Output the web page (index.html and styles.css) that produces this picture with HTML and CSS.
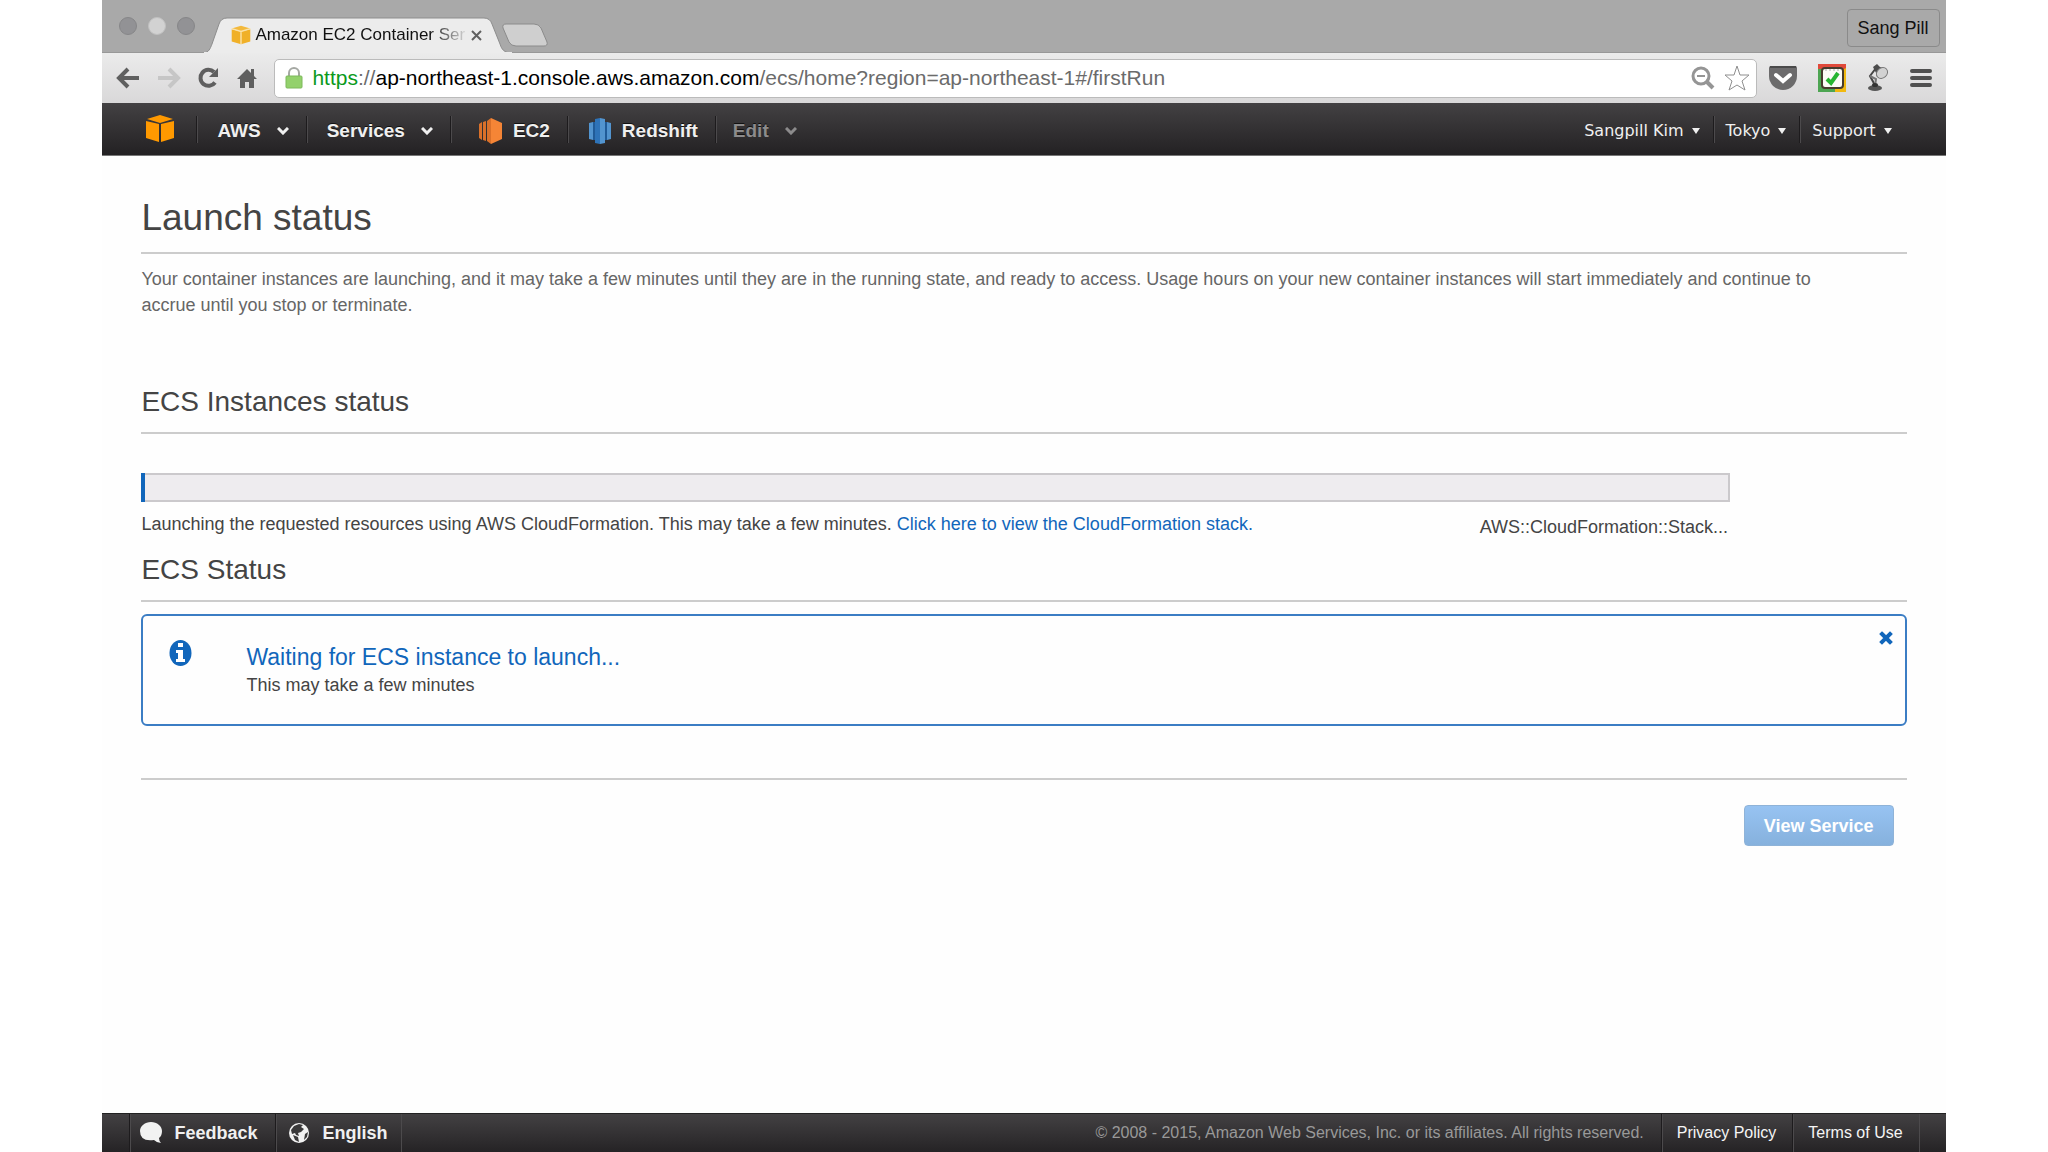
FILE: index.html
```html
<!DOCTYPE html>
<html lang="en">
<head>
  <meta charset="utf-8">
  <title>Amazon EC2 Container Service</title>
  <link rel="stylesheet" href="styles.css">
</head>
<body>
  <div class="window">
    <div class="tab-strip">
      <div class="lights"><span></span><span class="light"></span><span></span></div>
      <div class="tab">
        <svg class="tab-shape" viewBox="0 0 308 36"><path d="M0 36 C5 35 6 32 8 27 L15 7 Q17 1 23 1 H280 Q286 1 288 7 L296 27 C298 33 300 35 306 36Z" fill="#ececec" stroke="#8d8d8d"/><path d="M0 36H308" stroke="#ececec" stroke-width="2"/></svg>
        <svg class="favicon" width="20" height="20" viewBox="0 0 28 28"><path d="M1 6 14 9v18L1 23zM27 6 14 9v18l13-4z" fill="#f0b028"/><path d="M1 5 14 1l13 4-13 4z" fill="#f3b93c"/><path d="M1 5l13 4 13-4M14 9v18" stroke="#fbe2a8" stroke-width="2" fill="none"/></svg>
        <span class="tab-title">Amazon EC2 Container Ser</span>
        <button class="tab-close" aria-label="Close tab"><svg width="11" height="11" viewBox="0 0 11 11"><path d="M1 1l9 9M10 1l-9 9" stroke="#606060" stroke-width="2"/></svg></button>
      </div>
      <button class="new-tab" aria-label="New tab"><svg width="48" height="24" viewBox="0 0 48 24"><path d="M5 1H33Q38 1 40 5L46 19Q47 23 43 23H15Q10 23 8 19L2 5Q1 1 5 1Z" fill="#cfcfcf" stroke="#8b8b8b"/></svg></button>
      <button class="profile">Sang Pill</button>
    </div>

    <div class="toolbar">
      <button aria-label="Back"><svg width="24" height="22" viewBox="0 0 24 22"><path d="M12 2 3 11l9 9M3 11h20" stroke="#5f5f5f" stroke-width="4" fill="none"/></svg></button>
      <button aria-label="Forward"><svg width="24" height="22" viewBox="0 0 24 22"><path d="M12 2l9 9-9 9M21 11H1" stroke="#c6c6c6" stroke-width="4" fill="none"/></svg></button>
      <button aria-label="Reload"><svg width="22" height="22" viewBox="0 0 22 22"><path d="M17 15.500A8 8 0 1 1 16 5" stroke="#5f5f5f" stroke-width="4" fill="none"/><path d="M20 1v9h-9z" fill="#5f5f5f"/></svg></button>
      <button aria-label="Home"><svg width="20" height="22" viewBox="0 0 20 22"><path d="M10 2 0 12h3v9h5v-6h4v6h5v-9h3l-3-3V2h-3v4z" fill="#5f5f5f"/></svg></button>
      <div class="omnibox">
        <svg width="18" height="22" viewBox="0 0 18 22"><path d="M4 10V6a5 5 0 0 1 10 0v4" stroke="#a5a8a3" stroke-width="2" fill="none"/><rect x="1" y="9" width="16" height="12" rx="1" fill="#93d16c" stroke="#7cb95a"/></svg>
        <div class="url" role="textbox" aria-label="Address" contenteditable="true" spellcheck="false"><span class="scheme">https</span><span class="dim">://</span>ap-northeast-1.console.aws.amazon.com<span class="dim">/ecs/home?region=ap-northeast-1#/firstRun</span></div>
        <button aria-label="Zoom"><svg width="24" height="24" viewBox="0 0 24 24"><circle cx="10" cy="10" r="8" stroke="#959595" stroke-width="3" fill="none"/><path d="M6 10h8" stroke="#959595" stroke-width="2"/><path d="M16 16l6 6" stroke="#959595" stroke-width="4"/></svg></button>
        <button aria-label="Bookmark"><svg width="26" height="26" viewBox="0 0 26 26"><path d="M13 1l3 9h9l-7 6 3 9-8-5-8 5 3-9-7-6h9z" stroke="#8f8f8f" fill="#fff" stroke-linejoin="round"/></svg></button>
      </div>
      <div class="extensions">
        <button aria-label="Pocket"><svg width="28" height="26" viewBox="0 0 28 26"><path d="M2 1h24q2 0 2 2v8a14 14 0 0 1-28 0V3q0-2 2-2z" fill="#6c6b6c"/><path d="M1 2h26" stroke="#4a4a4a" stroke-width="2"/><path d="M7 10l7 6 7-6" stroke="#fff" stroke-width="4" fill="none" stroke-linecap="round"/></svg></button>
        <button aria-label="Tasks"><svg width="28" height="28" viewBox="0 0 28 28"><path d="M0 0h28v10H0z" fill="#e0493a"/><path d="M0 5h10v23H0z" fill="#4da552"/><path d="M0 28h18v-6H0z" fill="#4da552"/><path d="M28 4v24H17V10z" fill="#f2b90f"/><rect x="4" y="4" width="21" height="20" rx="3" fill="#fbfbf6" stroke="#463b2d" stroke-width="2"/><path d="M8 5v2M12 5v2M16 5v2M20 5v2" stroke="#aaa"/><path d="M9 15l4 4 7-10" stroke="#27b531" stroke-width="4" fill="none"/></svg></button>
        <button aria-label="Reading lamp"><svg width="22" height="28" viewBox="0 0 22 28"><path d="M9 23 3 12 9 4" stroke="#444" stroke-width="2" fill="none"/><path d="M3 12l6 3-1 7" stroke="#777" stroke-width="2" fill="none"/><path d="M6 3 10 0 13 3 19 5 12 14 8 7z" fill="#4c4c4c"/><ellipse cx="15" cy="9" rx="6" ry="5" transform="rotate(-42 15 9)" fill="#d2d2d2" stroke="#777"/><ellipse cx="8" cy="24" rx="7" ry="3" fill="#555"/><ellipse cx="8" cy="21" rx="3" ry="2" fill="#333"/></svg></button>
        <button aria-label="Menu"><svg width="22" height="20" viewBox="0 0 22 20"><path d="M2 3h18M2 10h18M2 17h18" stroke="#505050" stroke-width="4" stroke-linecap="round"/></svg></button>
      </div>
    </div>

    <nav class="aws-nav">
      <a class="logo" href="#" aria-label="Console home"><svg width="28" height="28" viewBox="0 0 28 28"><path d="M0 6l13 3v18L0 23zM28 6 15 9v18l13-4z" fill="#f90"/><path d="M1 4l13-4 13 4-13 4z" fill="#f90"/></svg></a>
      <button class="nav-item">AWS <svg width="12" height="8" viewBox="0 0 12 8"><path d="M1 1l5 5 5-5" /></svg></button>
      <button class="nav-item">Services <svg width="12" height="8" viewBox="0 0 12 8"><path d="M1 1l5 5 5-5" /></svg></button>
      <a class="nav-item service ec2" href="#"><svg width="24" height="26" viewBox="0 0 24 26"><path d="M0 6l3-2v18l-3-2zM4 4l3-1v20l-3-1zM8 3l4-3v26l-4-3z" fill="#d9702a"/><path d="M12 0l11 5v16l-11 5z" fill="#f58536"/></svg>EC2</a>
      <a class="nav-item service" href="#"><svg width="24" height="26" viewBox="0 0 24 26"><path d="M1 5l4-1v18l-4-1zM19 4l4 1v16l-4 1z" fill="#5294cf"/><path d="M5 4h2v18H5zM17 4h2v18h-2z" fill="#205b98"/><path d="M7 1l5-1v26l-5-1z" fill="#2e73b8"/><path d="M12 0l5 1v24l-5 1z" fill="#5294cf"/></svg>Redshift</a>
      <button class="nav-item edit">Edit <svg width="12" height="8" viewBox="0 0 12 8"><path d="M1 1l5 5 5-5" /></svg></button>
      <div class="account">
        <button>Sangpill Kim <span class="caret"></span></button>
        <button>Tokyo <span class="caret"></span></button>
        <button>Support <span class="caret"></span></button>
      </div>
    </nav>

    <main>
      <h1>Launch status</h1>
      <p class="intro">Your container instances are launching, and it may take a few minutes until they are in the running state, and ready to access. Usage hours on your new container instances will start immediately and continue to accrue until you stop or terminate.</p>

      <h2>ECS Instances status</h2>
      <div class="progress">
        <div class="track" role="progressbar" aria-label="Launch progress" aria-valuenow="0"><div class="bar"></div></div>
        <div class="caption">
          <span>Launching the requested resources using AWS CloudFormation. This may take a few minutes. <a href="#">Click here to view the CloudFormation stack.</a></span>
          <span class="resource">AWS::CloudFormation::Stack...</span>
        </div>
      </div>

      <h2 class="second">ECS Status</h2>
      <div class="alert">
        <svg class="info" width="23" height="26" viewBox="0 0 23 26"><ellipse cx="11.500" cy="13" rx="11" ry="13" fill="#1166bb"/><path d="M9 3h5v4H9zM7 10h7v9h2v3H7v-3h2v-6H7z" fill="#fff"/></svg>
        <div class="message">
          <h3>Waiting for ECS instance to launch...</h3>
          <p>This may take a few minutes</p>
        </div>
        <button class="dismiss" aria-label="Dismiss"><svg width="14" height="14" viewBox="0 0 14 14"><path d="M3 3l8 8M11 3l-8 8" stroke="#1166bb" stroke-width="4" stroke-linecap="square"/></svg></button>
      </div>

      <div class="actions">
        <button class="primary" disabled>View Service</button>
      </div>
    </main>

    <footer>
      <a class="foot-item" href="#"><svg width="22" height="22" viewBox="0 0 22 22"><path d="M11 0C17 0 22 4 22 9q0 5-3 7 0 3 2 5-4 0-7-3-14 2-14-9C0 4 5 0 11 0z" fill="#f2f2f2"/></svg>Feedback</a>
      <button class="foot-item"><svg width="22" height="22" viewBox="0 0 22 22"><circle cx="11" cy="11" r="10" fill="#f2f2f2"/><path d="M3 8 6 4l5-2 4 1-2 2 3 2-3 3-3 1 1 3-3-1-1-2-3 1zM5 13l5 2 1 5-4-2z" fill="#3a393a"/><path d="M17 12l3-2-1 5-3 3z" fill="#3a393a"/></svg>English</button>
      <span class="copyright">© 2008 - 2015, Amazon Web Services, Inc. or its affiliates. All rights reserved.</span>
      <div class="legal">
        <a href="#">Privacy Policy</a>
        <a href="#">Terms of Use</a>
      </div>
    </footer>
  </div>
</body>
</html>
```
FILE: styles.css
```css
* {
  box-sizing: border-box;
}
body {
  margin: 0;
  background: #fff;
  color: #444;
  font: 18px/26px "Liberation Sans", Arial, sans-serif;
}
svg {
  display: block;
  flex: none;
}
a {
  color: #1166bb;
  text-decoration: none;
}
button {
  padding: 0;
  border: none;
  background: none;
  color: inherit;
  font: inherit;
  cursor: pointer;
}
h1, h2, h3, p {
  margin: 0;
  font-weight: normal;
}
.window {
  display: flex;
  flex-direction: column;
  width: 90%;
  min-height: 100vh;
  margin: 0 auto;
  background: #fefefe;
}

/* browser chrome */
.tab-strip {
  display: flex;
  align-items: flex-end;
  height: 53px;
  padding: 0 6px 0 17px;
  background: #a9a9a9;
  border-bottom: 1px solid #989898;
}
.lights {
  display: flex;
  gap: 11px;
  align-self: center;
  margin-right: 3px;
}
.lights span {
  width: 18px;
  height: 18px;
  border: 1px solid #868688;
  border-radius: 50%;
  background: #929295;
}
.lights .light {
  background: #d2d2d2;
  border-color: #c0c0c0;
}
.tab {
  position: relative;
  display: flex;
  align-items: center;
  width: 308px;
  height: 36px;
  margin: 0 0 -1px 6px;
  padding: 0 30px 0 27px;
}
.tab-shape {
  position: absolute;
  inset: 0;
  width: 100%;
  height: 100%;
}
.favicon, .tab-title, .tab-close {
  position: relative;
}
.tab-title {
  flex: 1;
  margin: 0 2px 0 4px;
  white-space: nowrap;
  color: #111;
  font-size: 17px;
  -webkit-mask-image: linear-gradient(to right, #000 82%, transparent);
  mask-image: linear-gradient(to right, #000 82%, transparent);
}
.new-tab {
  margin: 0 auto 5px -11px;
}
.profile {
  height: 38px;
  margin-bottom: 5px;
  padding: 0 10px;
  border: 1px solid #8a8a8a;
  border-radius: 4px;
  color: #111;
}
.toolbar {
  display: flex;
  align-items: center;
  gap: 17px;
  height: 50px;
  padding: 0 14px;
  background: linear-gradient(#ebebeb, #d9d8d9);
}
.omnibox {
  flex: 1;
  display: flex;
  align-items: center;
  gap: 9px;
  height: 39px;
  padding: 0 6px 0 10px;
  border: 1px solid #bbb;
  border-radius: 5px;
  background: #fff;
}
.url {
  flex: 1;
  color: #000;
  font-size: 21px;
  outline: none;
}
.scheme {
  color: #0b9a1c;
}
.dim {
  color: #6b6b6b;
}
.extensions {
  display: flex;
  align-items: center;
  gap: 21px;
  margin-left: -5px;
}

/* console navigation */
.aws-nav {
  display: flex;
  align-items: center;
  height: 53px;
  border-bottom: 1px solid #777;
  background: linear-gradient(#434143, #232123);
  color: #f0f0f0;
}
.logo {
  padding: 0 22px 0 44px;
}
.nav-item {
  display: flex;
  align-items: center;
  gap: 16px;
  height: 27px;
  padding: 3px 17px 0 20px;
  border-left: 1px solid #1d1b1d;
  box-shadow: inset 1px 0 #4c4a4c;
  color: #f0f0f0;
  font-size: 19px;
  font-weight: bold;
  text-shadow: 0 -1px #111;
}
.nav-item path:only-child {
  fill: none;
  stroke: currentColor;
  stroke-width: 3;
}
.service {
  gap: 10px;
}
.ec2 {
  padding-left: 28px;
}
.edit {
  padding-left: 17px;
  color: #8c8b8c;
}
.account {
  display: flex;
  margin-left: auto;
  padding-right: 41px;
  font: 16px/24px "DejaVu Sans", Verdana, sans-serif;
}
.account button {
  display: flex;
  align-items: center;
  gap: 8px;
  height: 27px;
  padding: 3px 13px 0 12px;
}
.account button + button {
  border-left: 1px solid #1d1b1d;
  box-shadow: inset 1px 0 #4c4a4c;
}
.caret {
  border: 4px solid transparent;
  border-top: 6px solid #f0f0f0;
  border-bottom: none;
}

/* page */
main {
  flex: 1;
  padding: 38px 39px 0;
}
h1 {
  padding-bottom: 10px;
  border-bottom: 2px solid #ccc;
  font-size: 37px;
  line-height: 48px;
}
.intro {
  padding: 12px 60px 0 0;
  color: #666;
}
h2 {
  margin-top: 66px;
  padding-bottom: 12px;
  border-bottom: 2px solid #ccc;
  font-size: 28px;
  line-height: 36px;
}
.progress {
  width: 90%;
  margin-top: 39px;
}
.track {
  height: 29px;
  border: 2px solid #cbc9cc;
  border-left: none;
  background: #eeecef;
}
.bar {
  width: 4px;
  height: 29px;
  margin-top: -2px;
  background: #1166bb;
}
.caption {
  display: flex;
  justify-content: space-between;
  padding: 9px 2px 0 0;
}
.caption > span:first-child {
  flex: none;
}
.resource {
  padding-top: 3px;
}
h2.second {
  margin-top: 12px;
}
.alert {
  display: flex;
  align-items: flex-start;
  min-height: 112px;
  margin-top: 12px;
  padding: 15px 12px 0 26px;
  border: 2px solid #3b7dc4;
  border-radius: 6px;
}
.info {
  margin-top: 9px;
}
.message {
  flex: 1;
  padding-top: 11px;
  margin-left: 54px;
}
.message h3 {
  color: #1166bb;
  font-size: 23px;
  line-height: 30px;
}
.actions {
  margin-top: 52px;
  padding: 25px 13px 0;
  border-top: 2px solid #ccc;
  text-align: right;
}
.primary {
  height: 41px;
  padding: 0 19px;
  border: 1px solid #8fb3d8;
  border-radius: 4px;
  background: linear-gradient(#97c3f2, #86b1dd);
  color: #fff;
  font-weight: bold;
  cursor: default;
}

/* footer */
footer {
  display: flex;
  align-items: stretch;
  height: 39px;
  padding: 0 26px 0 27px;
  border-top: 1px solid #222;
  background: linear-gradient(#434143, #252325);
  color: #999;
  font-size: 16px;
}
.foot-item {
  display: flex;
  align-items: center;
  gap: 12px;
  padding: 0 18px 0 10px;
  border-left: 1px solid #1d1b1d;
  box-shadow: inset 1px 0 #4c4a4c;
  color: #f0f0f0;
  font-size: 18px;
  font-weight: bold;
}
button.foot-item {
  padding: 0 14px 0 12px;
  border-right: 1px solid #4c4a4c;
}
.copyright {
  margin: auto 17px auto auto;
}
.legal {
  display: flex;
  border-right: 1px solid #4c4a4c;
}
.legal a {
  display: flex;
  align-items: center;
  padding: 0 16px 0 15px;
  border-left: 1px solid #1d1b1d;
  box-shadow: inset 1px 0 #4c4a4c;
  color: #f5f5f5;
}
```
